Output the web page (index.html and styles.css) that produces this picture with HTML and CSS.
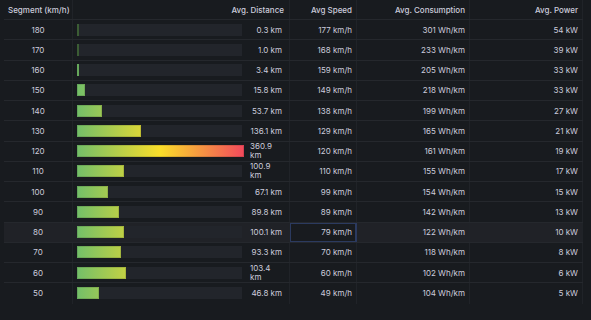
FILE: index.html
```html
<!DOCTYPE html>
<html>
<head>
<meta charset="utf-8">
<link rel="stylesheet" href="styles.css">
</head>
<body>
<div class="table">
  <div class="row head">
    <div class="cell c-seg left">Segment (km/h)</div>
    <div class="cell c-dist right">Avg. Distance</div>
    <div class="cell right">Avg Speed</div>
    <div class="cell right">Avg. Consumption</div>
    <div class="cell right last">Avg. Power</div>
  </div>

  <div class="row">
    <div class="cell center">180</div>
    <div class="cell gauge"><div class="track"><div class="fill tiny-dark"></div></div><div class="val"><span>0.3 km</span></div></div>
    <div class="cell right">177 km/h</div>
    <div class="cell right">301 Wh/km</div>
    <div class="cell right last">54 kW</div>
  </div>
  <div class="row">
    <div class="cell center">170</div>
    <div class="cell gauge"><div class="track"><div class="fill tiny-dark"></div></div><div class="val"><span>1.0 km</span></div></div>
    <div class="cell right">168 km/h</div>
    <div class="cell right">233 Wh/km</div>
    <div class="cell right last">39 kW</div>
  </div>
  <div class="row">
    <div class="cell center">160</div>
    <div class="cell gauge"><div class="track"><div class="fill" style="width:2px"></div></div><div class="val"><span>3.4 km</span></div></div>
    <div class="cell right">159 km/h</div>
    <div class="cell right">205 Wh/km</div>
    <div class="cell right last">33 kW</div>
  </div>
  <div class="row">
    <div class="cell center">150</div>
    <div class="cell gauge"><div class="track"><div class="fill" style="width:7.5px"></div></div><div class="val"><span>15.8 km</span></div></div>
    <div class="cell right">149 km/h</div>
    <div class="cell right">218 Wh/km</div>
    <div class="cell right last">33 kW</div>
  </div>
  <div class="row">
    <div class="cell center">140</div>
    <div class="cell gauge"><div class="track"><div class="fill" style="width:25px"></div></div><div class="val"><span>53.7 km</span></div></div>
    <div class="cell right">138 km/h</div>
    <div class="cell right">199 Wh/km</div>
    <div class="cell right last">27 kW</div>
  </div>
  <div class="row">
    <div class="cell center">130</div>
    <div class="cell gauge"><div class="track"><div class="fill" style="width:64px"></div></div><div class="val"><span>136.1 km</span></div></div>
    <div class="cell right">129 km/h</div>
    <div class="cell right">165 Wh/km</div>
    <div class="cell right last">21 kW</div>
  </div>
  <div class="row">
    <div class="cell center">120</div>
    <div class="cell gauge"><div class="track"><div class="fill" style="width:167px"></div></div><div class="val wrap"><span>360.9<br>km</span></div></div>
    <div class="cell right">120 km/h</div>
    <div class="cell right">161 Wh/km</div>
    <div class="cell right last">19 kW</div>
  </div>
  <div class="row">
    <div class="cell center">110</div>
    <div class="cell gauge"><div class="track"><div class="fill" style="width:47px"></div></div><div class="val wrap"><span>100.9<br>km</span></div></div>
    <div class="cell right">110 km/h</div>
    <div class="cell right">155 Wh/km</div>
    <div class="cell right last">17 kW</div>
  </div>
  <div class="row">
    <div class="cell center">100</div>
    <div class="cell gauge"><div class="track"><div class="fill" style="width:31px"></div></div><div class="val"><span>67.1 km</span></div></div>
    <div class="cell right">99 km/h</div>
    <div class="cell right">154 Wh/km</div>
    <div class="cell right last">15 kW</div>
  </div>
  <div class="row">
    <div class="cell center">90</div>
    <div class="cell gauge"><div class="track"><div class="fill" style="width:42px"></div></div><div class="val"><span>89.8 km</span></div></div>
    <div class="cell right">89 km/h</div>
    <div class="cell right">142 Wh/km</div>
    <div class="cell right last">13 kW</div>
  </div>
  <div class="row hover">
    <div class="cell center">80</div>
    <div class="cell gauge"><div class="track"><div class="fill" style="width:47px"></div></div><div class="val"><span>100.1 km</span></div></div>
    <div class="cell right focus">79 km/h</div>
    <div class="cell right">122 Wh/km</div>
    <div class="cell right last">10 kW</div>
  </div>
  <div class="row">
    <div class="cell center">70</div>
    <div class="cell gauge"><div class="track"><div class="fill" style="width:44px"></div></div><div class="val"><span>93.3 km</span></div></div>
    <div class="cell right">70 km/h</div>
    <div class="cell right">118 Wh/km</div>
    <div class="cell right last">8 kW</div>
  </div>
  <div class="row">
    <div class="cell center">60</div>
    <div class="cell gauge"><div class="track"><div class="fill" style="width:48.5px"></div></div><div class="val wrap"><span>103.4<br>km</span></div></div>
    <div class="cell right">60 km/h</div>
    <div class="cell right">102 Wh/km</div>
    <div class="cell right last">6 kW</div>
  </div>
  <div class="row lastrow">
    <div class="cell center">50</div>
    <div class="cell gauge"><div class="track"><div class="fill" style="width:22px"></div></div><div class="val"><span>46.8 km</span></div></div>
    <div class="cell right">49 km/h</div>
    <div class="cell right">104 Wh/km</div>
    <div class="cell right last">5 kW</div>
  </div>
</div>
</body>
</html>
```

FILE: styles.css
```css
html, body {
  margin: 0;
  padding: 0;
  background: #181b1f;
}
body {
  width: 591px;
  height: 320px;
  overflow: hidden;
  font-family: Inter, "Noto Sans", sans-serif;
  font-size: 8px;
  color: #ccccdc;
}
.table {
  margin-left: 4px;
  width: 579px;
  display: flex;
  flex-direction: column;
}
.row {
  display: grid;
  grid-template-columns: 69px 217px 67px 113px 113px;
  height: 20.25px;
  box-sizing: border-box;
  border-bottom: 1px solid #25282d;
}
.row.head {
  height: 20px;
  font-weight: 500;
}
.row.lastrow {
  border-bottom: none;
}
.row.hover {
  background: #202227;
}
.cell {
  display: flex;
  align-items: center;
  border-right: 1px solid #202328;
  overflow: hidden;
  white-space: nowrap;
  box-sizing: border-box;
  min-width: 0;
}
.cell.left {
  justify-content: flex-start;
  padding-left: 4px;
}
.cell.center {
  justify-content: center;
}
.cell.right {
  justify-content: flex-end;
  padding-right: 4px;
}
.cell.c-dist.right {
  padding-right: 5px;
}
.cell.focus {
  background: #181b1f;
  box-shadow: inset 0 0 0 1px #2b3a5f;
  border-right-color: #2b3a5f;
}
.cell.gauge {
  padding-left: 4px;
  padding-right: 8px;
  gap: 8px;
}
.track {
  width: 165px;
  height: 12px;
  flex: none;
  background: #22252b;
  display: flex;
}
.fill {
  height: 12px;
  flex: none;
  background-image: linear-gradient(90deg, #73bf69 0%, #fade2a 50%, #f2495c 100%);
  background-size: 167px 12px;
  background-repeat: no-repeat;
  box-shadow: inset 0 0 0 1px rgba(0, 0, 0, 0.12);
}
.fill.tiny-dark {
  width: 2px;
  background: #3b5c34;
  box-shadow: none;
}
.val {
  width: 32px;
  flex: none;
  display: flex;
  justify-content: flex-end;
}
.val.wrap {
  justify-content: flex-start;
  line-height: 9px;
}
```
